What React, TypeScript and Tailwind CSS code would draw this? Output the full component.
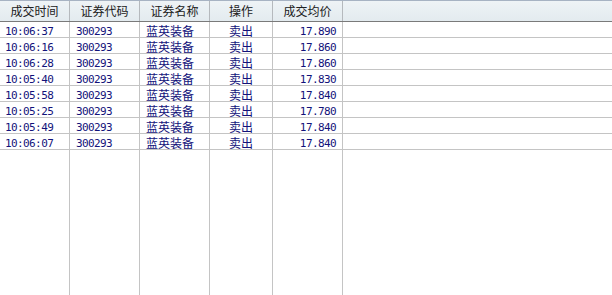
import React from "react";

type Trade = {
  time: string;
  code: string;
  name: string;
  side: string;
  price: string;
};

const trades: Trade[] = [
  { time: "10:06:37", code: "300293", name: "蓝英装备", side: "卖出", price: "17.890" },
  { time: "10:06:16", code: "300293", name: "蓝英装备", side: "卖出", price: "17.860" },
  { time: "10:06:28", code: "300293", name: "蓝英装备", side: "卖出", price: "17.860" },
  { time: "10:05:40", code: "300293", name: "蓝英装备", side: "卖出", price: "17.830" },
  { time: "10:05:58", code: "300293", name: "蓝英装备", side: "卖出", price: "17.840" },
  { time: "10:05:25", code: "300293", name: "蓝英装备", side: "卖出", price: "17.780" },
  { time: "10:05:49", code: "300293", name: "蓝英装备", side: "卖出", price: "17.840" },
  { time: "10:06:07", code: "300293", name: "蓝英装备", side: "卖出", price: "17.840" },
];

const cjk = "font-['Noto_Sans_CJK_SC',sans-serif] text-[12px]";
const num =
  "font-['DejaVu_Sans_Mono','Noto_Sans_CJK_SC',monospace] text-[11px] tracking-[-0.6px]";

// column widths incl. right border
const cols = ["w-[70px]", "w-[70px]", "w-[70px]", "w-[63px]", "w-[70px]"];

const App = () => {
  const headers = ["成交时间", "证券代码", "证券名称", "操作", "成交均价"];

  return (
    <div className="w-[612px] h-[295px] bg-white flex flex-col overflow-hidden">
      {/* Header */}
      <div className="flex h-[22px] shrink-0 border-t border-b border-t-[#a7b3c3] border-b-[#7a7a7a] bg-gradient-to-b from-[#eef3f6] to-[#e3ebef]">
        {headers.map((h, i) => (
          <div
            key={h}
            className={`${cols[i]} shrink-0 border-r border-[#b5b9bd] flex items-center justify-center text-[#202020] leading-none ${cjk}`}
          >
            {h}
          </div>
        ))}
        <div className="flex-1" />
      </div>

      {/* Rows */}
      {trades.map((t, idx) => (
        <div
          key={idx}
          className="flex h-[16px] shrink-0 border-b border-[#c4c4c4] text-[#12127a] leading-none"
        >
          <div className={`${cols[0]} shrink-0 border-r border-[#c4c4c4] flex items-center pt-[3px] pl-[5px] ${num}`}>
            {t.time}
          </div>
          <div className={`${cols[1]} shrink-0 border-r border-[#c4c4c4] flex items-center pt-[3px] pl-[6px] ${num}`}>
            {t.code}
          </div>
          <div className={`${cols[2]} shrink-0 border-r border-[#c4c4c4] flex items-center pt-[2px] pl-[6px] ${cjk}`}>
            {t.name}
          </div>
          <div className={`${cols[3]} shrink-0 border-r border-[#c4c4c4] flex items-center justify-center pt-[2px] ${cjk}`}>
            {t.side}
          </div>
          <div className={`${cols[4]} shrink-0 border-r border-[#c4c4c4] flex items-center justify-end pt-[3px] pr-[6px] ${num}`}>
            {t.price}
          </div>
          <div className="flex-1" />
        </div>
      ))}

      {/* Empty area, column lines continue */}
      <div className="flex flex-1">
        {cols.map((c, i) => (
          <div key={i} className={`${c} shrink-0 border-r border-[#c4c4c4]`} />
        ))}
        <div className="flex-1" />
      </div>
    </div>
  );
};

export default App;
